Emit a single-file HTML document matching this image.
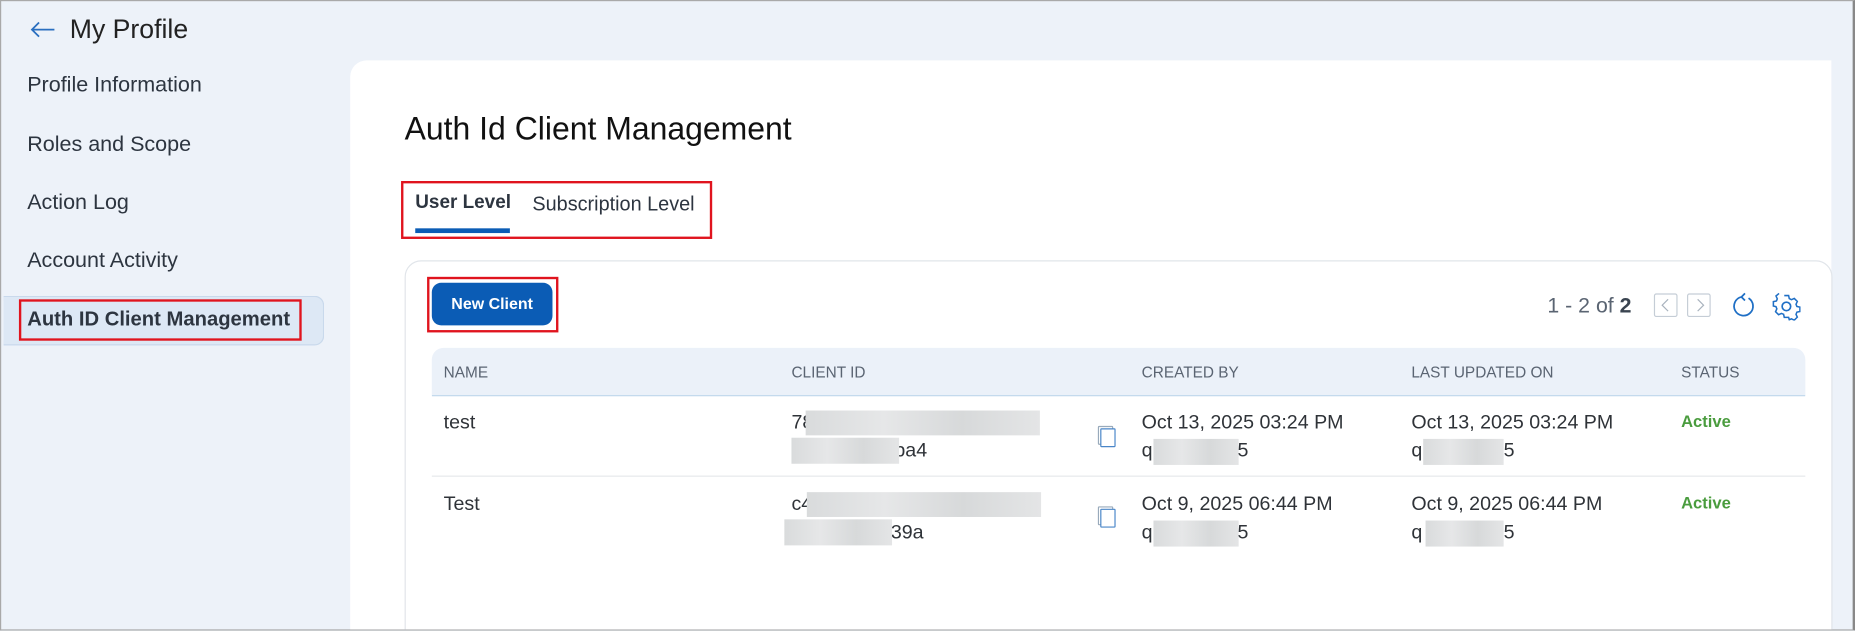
<!DOCTYPE html>
<html><head><meta charset="utf-8"><style>
html,body{margin:0;padding:0;width:1855px;height:631px;overflow:hidden;background:#edf2f9}
#s{position:absolute;left:0;top:0;width:1568px;height:533px;overflow:hidden;transform:scale(1.18304);transform-origin:0 0;font-family:"Liberation Sans",sans-serif;background:#edf2f9;box-sizing:border-box;border:1px solid #a9a9a9;border-right:2px solid #888}
.a{position:absolute;white-space:nowrap}
.nav{left:22px;font-size:18.2px;color:#2d3540;transform:translateY(-50%)}
.h{font-size:13px;color:#5a6472;top:306px}
.t{font-size:16.6px;color:#2f3338}
.blur{position:absolute;background:linear-gradient(90deg,#d9dbdc,#e6e7e8,#d7d9da,#e4e5e6);}
.cp{position:absolute;width:11px;height:14px;border:1.5px solid #4a86c8;border-radius:1px;background:#fff}
.act{font-size:14px;font-weight:bold;color:#4a9c3e}
</style></head><body><div id="s">
<svg class="a" style="left:24px;top:16px" width="22" height="16" viewBox="0 0 22 16"><path d="M21 8H2M8 2L2 8l6 6" fill="none" stroke="#2a6fc0" stroke-width="1.5"/></svg>
<div class="a" style="left:58px;top:11px;font-size:22.5px;color:#222">My Profile</div>
<div class="a nav" style="top:71px">Profile Information</div>
<div class="a nav" style="top:121px">Roles and Scope</div>
<div class="a nav" style="top:170px">Action Log</div>
<div class="a nav" style="top:219px">Account Activity</div>
<div class="a" style="left:2px;top:249px;width:270px;height:40px;background:#dde8f5;border:1px solid #c9d9ec;border-left:none;border-radius:0 8px 8px 0"></div>
<div class="a" style="left:15px;top:252px;width:235px;height:31px;border:2px solid #e0141e"></div>
<div class="a nav" style="top:269px;font-weight:bold;font-size:17.1px;color:#2d3540">Auth ID Client Management</div>
<div class="a" style="left:295px;top:50px;width:1252px;height:482px;background:#fff;border-radius:14px 0 0 0"></div>
<div class="a" style="left:341px;top:93px;font-size:27px;color:#111">Auth Id Client Management</div>
<div class="a" style="left:338px;top:152px;width:259px;height:45px;border:2px solid #e0141e"></div>
<div class="a" style="left:350px;top:162px;font-size:16px;font-weight:bold;color:#2d3540">User Level</div>
<div class="a" style="left:350px;top:192px;width:80px;height:4px;background:#0b5cb5"></div>
<div class="a" style="left:449px;top:162px;font-size:16.8px;color:#2d3540">Subscription Level</div>
<div class="a" style="left:341px;top:219px;width:1205px;height:330px;border:1px solid #e1e5ea;border-radius:14px"></div>
<div class="a" style="left:360px;top:233px;width:107px;height:43px;border:2px solid #e0141e"></div>
<div class="a" style="left:364px;top:238px;width:102px;height:36px;background:#0b5cb5;border-radius:8px;color:#fff;font-size:13.5px;font-weight:bold;text-align:center;line-height:36px">New Client</div>
<div class="a" style="left:1307px;top:247px;font-size:18px;color:#5a6472">1 - 2 of <b style="color:#3a4450">2</b></div>
<div class="a" style="left:1397px;top:247px;width:18px;height:18px;border:1px solid #c5cdd6;border-radius:2px"></div>
<div class="a" style="left:1425px;top:247px;width:18px;height:18px;border:1px solid #c5cdd6;border-radius:2px"></div>
<svg class="a" style="left:1397px;top:247px" width="48" height="20"><path d="M12 5L7 10l5 5M37 5l5 5-5 5" fill="none" stroke="#a8b2bd" stroke-width="1"/></svg>
<svg class="a" style="left:1462px;top:245px" width="22" height="24" viewBox="0 0 22 24"><path d="M15 6A8 8 0 1 1 9 5M9 5l3-3M9 5l3 3" fill="none" stroke="#1f6fc5" stroke-width="1.5"/></svg>
<svg class="a" style="left:1497px;top:246px" width="24" height="24" viewBox="0 0 24 24"><path d="M10 2h4l.6 2.8 2 1 2.6-1.2 2.8 2.8-1.2 2.6.8 2 2.8.6v4l-2.8.6-.8 2 1.2 2.6-2.8 2.8-2.6-1.2-2 .8L14 22h-4l-.6-2.8-2-.8-2.6 1.2L2 16.8l1.2-2.6-.8-2L0 11.6v-4l2.8-.6.8-2L2.4 2.4 5.2 0" fill="none" stroke="#1f6fc5" stroke-width="1.4" transform="translate(1 1) scale(.92)"/><circle cx="12" cy="12" r="3.6" fill="none" stroke="#1f6fc5" stroke-width="1.4"/></svg>
<div class="a" style="left:364px;top:293px;width:1161px;height:40px;background:#ebf1f9;border-bottom:1.5px solid #b9d3ea;border-radius:10px 10px 0 0"></div>
<div class="a h" style="left:374px">NAME</div>
<div class="a h" style="left:668px">CLIENT ID</div>
<div class="a h" style="left:964px">CREATED BY</div>
<div class="a h" style="left:1192px">LAST UPDATED ON</div>
<div class="a h" style="left:1420px">STATUS</div>
<div class="a" style="left:364px;top:401px;width:1161px;height:1px;background:#e6e8eb"></div>
<div class="a t" style="left:374px;top:346px">test</div>
<div class="a t" style="left:668px;top:346px">78</div>
<div class="blur" style="left:680px;top:346px;width:198px;height:21px"></div>
<div class="a t" style="left:755px;top:370px">ba4</div>
<div class="blur" style="left:668px;top:369px;width:91px;height:22px"></div>
<div class="cp" style="left:927px;top:359px;border-color:#9ab;"></div><div class="cp" style="left:929px;top:361px"></div>
<div class="a t" style="left:964px;top:346px">Oct 13, 2025 03:24 PM</div>
<div class="a t" style="left:964px;top:370px">q</div><div class="blur" style="left:974px;top:370px;width:72px;height:22px"></div><div class="a t" style="left:1045px;top:370px">5</div>
<div class="a t" style="left:1192px;top:346px">Oct 13, 2025 03:24 PM</div>
<div class="a t" style="left:1192px;top:370px">q</div><div class="blur" style="left:1202px;top:370px;width:68px;height:22px"></div><div class="a t" style="left:1270px;top:370px">5</div>
<div class="a act" style="left:1420px;top:347px">Active</div>
<div class="a t" style="left:374px;top:415px">Test</div>
<div class="a t" style="left:668px;top:415px">c4</div>
<div class="blur" style="left:681px;top:415px;width:198px;height:21px"></div>
<div class="a t" style="left:752px;top:439px">39a</div>
<div class="blur" style="left:662px;top:438px;width:91px;height:22px"></div>
<div class="cp" style="left:927px;top:427px;border-color:#9ab;"></div><div class="cp" style="left:929px;top:429px"></div>
<div class="a t" style="left:964px;top:415px">Oct 9, 2025 06:44 PM</div>
<div class="a t" style="left:964px;top:439px">q</div><div class="blur" style="left:974px;top:439px;width:72px;height:22px"></div><div class="a t" style="left:1045px;top:439px">5</div>
<div class="a t" style="left:1192px;top:415px">Oct 9, 2025 06:44 PM</div>
<div class="a t" style="left:1192px;top:439px">q</div><div class="blur" style="left:1204px;top:439px;width:66px;height:22px"></div><div class="a t" style="left:1270px;top:439px">5</div>
<div class="a act" style="left:1420px;top:416px">Active</div>
</div></body></html>
